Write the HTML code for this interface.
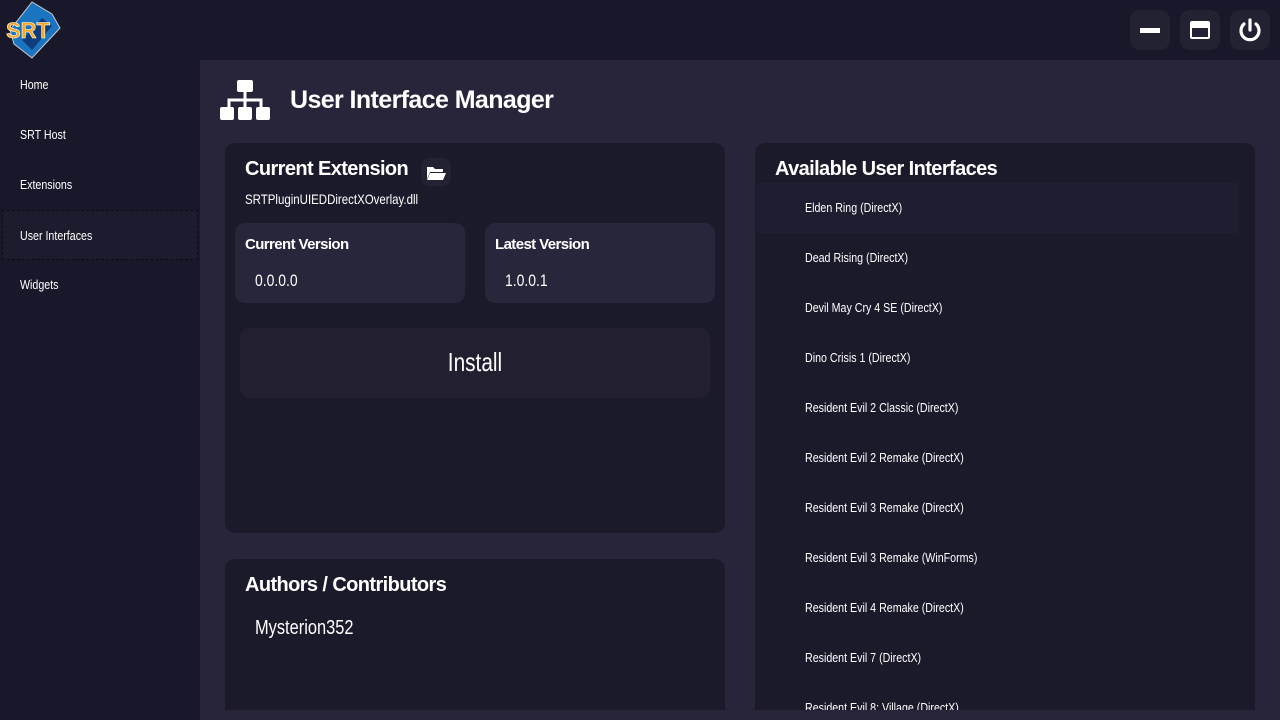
<!DOCTYPE html>
<html><head><meta charset="utf-8"><style>
*{box-sizing:border-box;margin:0;padding:0}
body{width:1280px;height:720px;overflow:hidden;background:#28253a;font-family:"Liberation Sans",sans-serif;color:#fff;position:relative}
.n{display:inline-block;transform:scaleX(0.82);transform-origin:left center;white-space:nowrap}
.top{position:absolute;left:0;top:0;width:1280px;height:60px;background:#19182a}
.side{position:absolute;left:0;top:60px;width:200px;height:660px;background:#19182a}
.side div{height:50px;line-height:50px;padding-left:20px;font-size:13px}
.side .act{border:1px dashed #0c0c16;background:#1d1c2e;margin:0 2px;padding-left:17px}
.btn{position:absolute;top:10px;width:40px;height:40px;border-radius:10px;background:#232233}
.card{position:absolute;background:#1b1a2b;border-radius:10px}
h2{font-family:"Liberation Sans",sans-serif;font-weight:bold;font-size:20px;letter-spacing:-0.6px}
.vc{position:absolute;top:80px;width:230px;height:80px;background:#28263a;border-radius:10px}
.vc b{position:absolute;left:10px;top:13px;font-size:15px;letter-spacing:-0.6px}
.vc span.v{position:absolute;left:20px;top:48px;font-size:17px}
.list div{height:50px;line-height:50px;padding-left:50px;font-size:13px}
</style></head><body>
<div class="top"></div>
<svg style="position:absolute;left:2px;top:0" width="66" height="62" viewBox="0 0 66 62">
<polygon points="30,2 50,14 58,28 30,58 12,44 8,30" fill="#1b74c0" stroke="#ccc" stroke-width="1"/>
<polygon points="20,40 40,18 50,26 30,50" fill="#0e3d7a"/>
<text x="4" y="38" font-family="Liberation Sans" font-weight="bold" font-size="22" fill="#f5a623" stroke="#fff" stroke-width="0.6">SRT</text>
</svg>
<div class="btn" style="left:1130px"><div style="position:absolute;left:10px;top:18px;width:20px;height:5px;background:#fff"></div></div>
<div class="btn" style="left:1180px"><div style="position:absolute;left:10px;top:11px;width:20px;height:18px;border-radius:2px;background:#fff"><div style="position:absolute;left:2px;top:7px;width:16px;height:9px;background:#232233"></div></div></div>
<div class="btn" style="left:1230px"><svg width="40" height="40" viewBox="0 0 40 40"><path d="M14 14 A9 9 0 1 0 26 14" fill="none" stroke="#fff" stroke-width="3.2" stroke-linecap="round"/><line x1="20" y1="10" x2="20" y2="20" stroke="#fff" stroke-width="3.2" stroke-linecap="round"/></svg></div>
<div class="side">
<div><span class="n">Home</span></div><div><span class="n">SRT Host</span></div><div><span class="n">Extensions</span></div><div class="act"><span class="n">User Interfaces</span></div><div><span class="n">Widgets</span></div>
</div>
<svg style="position:absolute;left:220px;top:80px" width="52" height="40" viewBox="0 0 52 40"><rect x="17" y="0" width="16" height="12" rx="2" fill="#fff"/><path d="M25 12v8M9 27v-7h32v7M25 20v7" stroke="#fff" stroke-width="3" fill="none"/><rect x="0" y="27" width="14" height="13" rx="2" fill="#fff"/><rect x="18" y="27" width="14" height="13" rx="2" fill="#fff"/><rect x="36" y="27" width="14" height="13" rx="2" fill="#fff"/></svg>
<h2 style="position:absolute;left:290px;top:86px;font-size:25px">User Interface Manager</h2>
<div class="card" style="left:225px;top:143px;width:500px;height:390px">
<h2 style="position:absolute;left:20px;top:15px">Current Extension</h2>
<div style="position:absolute;left:196px;top:15px;width:30px;height:28px;border-radius:8px;background:#232233"><svg width="30" height="28" viewBox="0 0 30 28"><path d="M6 9h6l2 2h8v3H9l-3 7z M9 15h16l-3 7H6z" fill="#fff"/></svg></div>
<div style="position:absolute;left:20px;top:48px;font-size:14px"><span class="n">SRTPluginUIEDDirectXOverlay.dll</span></div>
<div class="vc" style="left:10px"><b>Current Version</b><span class="v"><span class="n">0.0.0.0</span></span></div>
<div class="vc" style="left:260px"><b>Latest Version</b><span class="v"><span class="n">1.0.0.1</span></span></div>
<div style="position:absolute;left:15px;top:185px;width:470px;height:70px;border-radius:10px;background:#222030;text-align:center;line-height:68px;font-size:26px"><span style="display:inline-block;transform:scaleX(0.8)">Install</span></div>
</div>
<div class="card" style="left:225px;top:559px;width:500px;height:151px;border-radius:10px 10px 0 0">
<h2 style="position:absolute;left:20px;top:15px">Authors / Contributors</h2>
<div style="position:absolute;left:30px;top:58px;font-size:20px"><span class="n">Mysterion352</span></div>
</div>
<div class="card" style="left:755px;top:143px;width:500px;height:567px;border-radius:10px 10px 0 0;overflow:hidden">
<h2 style="position:absolute;left:20px;top:15px">Available User Interfaces</h2>
<div class="list" style="position:absolute;left:0;top:40px;width:483px">
<div style="background:#1f1e30"><span class="n">Elden Ring (DirectX)</span></div><div><span class="n">Dead Rising (DirectX)</span></div><div><span class="n">Devil May Cry 4 SE (DirectX)</span></div><div><span class="n">Dino Crisis 1 (DirectX)</span></div><div><span class="n">Resident Evil 2 Classic (DirectX)</span></div><div><span class="n">Resident Evil 2 Remake (DirectX)</span></div><div><span class="n">Resident Evil 3 Remake (DirectX)</span></div><div><span class="n">Resident Evil 3 Remake (WinForms)</span></div><div><span class="n">Resident Evil 4 Remake (DirectX)</span></div><div><span class="n">Resident Evil 7 (DirectX)</span></div><div><span class="n">Resident Evil 8: Village (DirectX)</span></div>
</div></div>
</body></html>
